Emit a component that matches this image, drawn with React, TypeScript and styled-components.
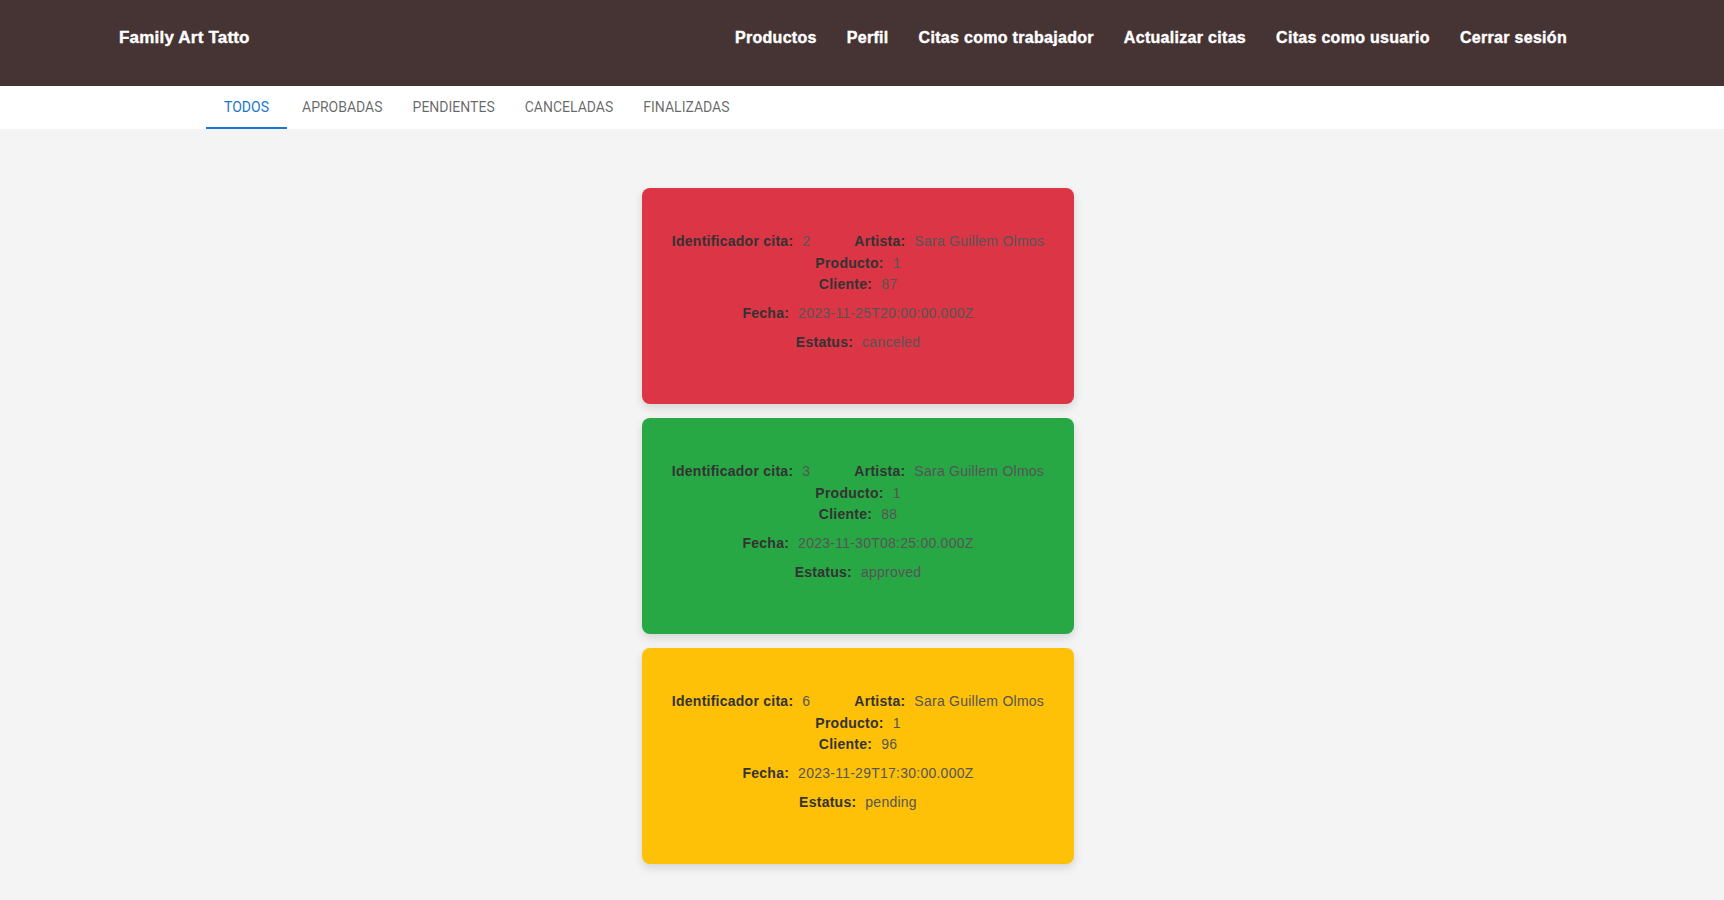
import React, { useState } from "react";
import styled, { createGlobalStyle } from "styled-components";

const GlobalStyle = createGlobalStyle`
  html, body {
    margin: 0;
    padding: 0;
    background: #f4f4f4;
    font-family: "Liberation Sans", Arial, sans-serif;
  }
  * { box-sizing: border-box; }
`;

const Header = styled.header`
  height: 86px;
  background: #463333;
  display: flex;
  align-items: flex-start;
  justify-content: space-between;
  padding: 28px 157px 0 119px;
`;

const Brand = styled.a`
  color: #fff;
  font-family: "Liberation Sans", Arial, sans-serif;
  font-weight: 700;
  font-size: 17px;
  letter-spacing: 0.2px;
  -webkit-text-stroke: 0.4px #fff;
  text-decoration: none;
  white-space: nowrap;
`;

const Nav = styled.nav`
  display: flex;
  gap: 30px;
  padding-top: 1px;
`;

const NavLink = styled.a`
  color: #fff;
  font-family: "Liberation Sans", Arial, sans-serif;
  font-weight: 700;
  font-size: 16px;
  letter-spacing: 0.3px;
  -webkit-text-stroke: 0.4px #fff;
  text-decoration: none;
  white-space: nowrap;
  cursor: pointer;
`;

const TabBar = styled.div`
  height: 43px;
  background: #fff;
  display: flex;
  padding-left: 206px;
`;

const Tab = styled.button<{ $active?: boolean }>`
  position: relative;
  height: 43px;
  min-width: 81px;
  padding: 0 15px 1px;
  border: none;
  background: transparent;
  font-family: Roboto, "Liberation Sans", sans-serif;
  font-weight: 400;
  font-size: 14px;
  letter-spacing: 0;
  text-transform: uppercase;
  color: ${(p) => (p.$active ? "#1976d2" : "rgba(0,0,0,0.6)")};
  display: flex;
  align-items: center;
  justify-content: center;
  cursor: pointer;
  &::after {
    content: "";
    position: absolute;
    left: 0;
    right: 0;
    bottom: 0;
    height: 2px;
    background: ${(p) => (p.$active ? "#1976d2" : "transparent")};
  }
`;

const Main = styled.main`
  display: flex;
  flex-direction: column;
  align-items: center;
  padding: 59px 8px 40px 0;
  gap: 14px;
`;

const Card = styled.div<{ $bg: string }>`
  width: 432px;
  height: 216px;
  background: ${(p) => p.$bg};
  border-radius: 8px;
  box-shadow: 0 4px 10px rgba(0, 0, 0, 0.13);
  padding: 43px 20px 0;
  display: flex;
  flex-direction: column;
  align-items: center;
  font-family: "Liberation Sans", Arial, sans-serif;
  font-size: 14px;
  letter-spacing: 0.25px;
`;

const TopRow = styled.div`
  display: flex;
  gap: 44px;
  justify-content: center;
`;

const Line = styled.div<{ $space?: number }>`
  display: flex;
  justify-content: center;
  line-height: 21px;
  margin-top: ${(p) => p.$space ?? 0}px;
  white-space: nowrap;
`;

const Label = styled.span`
  font-weight: 700;
  color: #333;
`;

const Value = styled.span`
  color: #555;
  margin-left: 9px;
`;

type Cita = {
  id: number;
  artista: string;
  producto: number;
  cliente: number;
  fecha: string;
  estatus: string;
};

const citas: Cita[] = [
  { id: 2, artista: "Sara Guillem Olmos", producto: 1, cliente: 87, fecha: "2023-11-25T20:00:00.000Z", estatus: "canceled" },
  { id: 3, artista: "Sara Guillem Olmos", producto: 1, cliente: 88, fecha: "2023-11-30T08:25:00.000Z", estatus: "approved" },
  { id: 6, artista: "Sara Guillem Olmos", producto: 1, cliente: 96, fecha: "2023-11-29T17:30:00.000Z", estatus: "pending" },
];

const colors: Record<string, string> = {
  canceled: "#dc3545",
  approved: "#28a745",
  pending: "#ffc107",
};

const tabs = ["Todos", "Aprobadas", "Pendientes", "Canceladas", "Finalizadas"];
const links = ["Productos", "Perfil", "Citas como trabajador", "Actualizar citas", "Citas como usuario", "Cerrar sesión"];

export default function App() {
  const [active, setActive] = useState(0);
  return (
    <>
      <GlobalStyle />
      <Header>
        <Brand>Family Art Tatto</Brand>
        <Nav>
          {links.map((l) => (
            <NavLink key={l}>{l}</NavLink>
          ))}
        </Nav>
      </Header>
      <TabBar>
        {tabs.map((t, i) => (
          <Tab key={t} $active={i === active} onClick={() => setActive(i)}>
            {t}
          </Tab>
        ))}
      </TabBar>
      <Main>
        {citas.map((c) => (
          <Card key={c.id} $bg={colors[c.estatus]}>
            <TopRow>
              <Line>
                <Label>Identificador cita:</Label>
                <Value>{c.id}</Value>
              </Line>
              <Line>
                <Label>Artista:</Label>
                <Value>{c.artista}</Value>
              </Line>
            </TopRow>
            <Line $space={1}>
              <Label>Producto:</Label>
              <Value>{c.producto}</Value>
            </Line>
            <Line>
              <Label>Cliente:</Label>
              <Value>{c.cliente}</Value>
            </Line>
            <Line $space={8}>
              <Label>Fecha:</Label>
              <Value>{c.fecha}</Value>
            </Line>
            <Line $space={8}>
              <Label>Estatus:</Label>
              <Value>{c.estatus}</Value>
            </Line>
          </Card>
        ))}
      </Main>
    </>
  );
}
